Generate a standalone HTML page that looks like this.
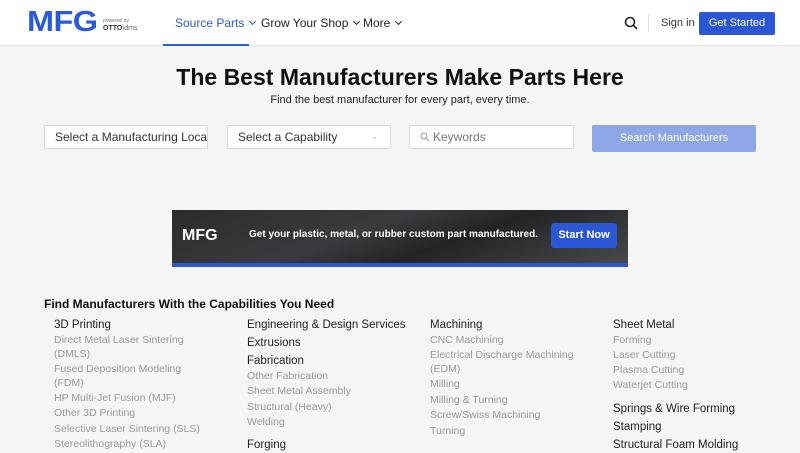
<!DOCTYPE html>
<html><head><meta charset="utf-8"><style>
*{margin:0;padding:0;box-sizing:border-box}
body{width:800px;height:450px;overflow:hidden;background:#f5f5f5;font-family:"Liberation Sans",sans-serif;position:relative;color:#222}
.hdr{position:absolute;left:0;top:0;width:800px;height:46px;background:#fff;border-bottom:1px solid #e6e6e6}
.a{position:absolute;white-space:nowrap;line-height:1.2}
.nav{font-size:12px;top:16px;color:#222}
.chev{display:inline-block;width:5px;height:5px;border-right:1.2px solid currentColor;border-bottom:1.2px solid currentColor;transform:rotate(45deg);margin-left:6px;position:relative;top:-3px}
.box{position:absolute;top:125px;height:24px;background:#fff;border:1px solid #d8d8d8;border-radius:2px;font-size:12px;color:#333;padding:0 10px;line-height:22px;white-space:nowrap;overflow:hidden}
.h{font-size:11.5px;color:#222}
.s{font-size:10.5px;color:#999}
.l{position:absolute;left:0;top:1px;width:800px;height:450px}
</style></head><body>
<div class="hdr">
  <div class="a" style="left:27px;top:8px;font-size:29px;line-height:29px;font-weight:bold;color:#2b5bd7;letter-spacing:-0.5px;transform:scaleX(1.12);transform-origin:left">MFG</div>
  <div class="a" style="left:103px;top:18px;font-size:5px;color:#777">powered by</div>
  <div class="a" style="left:103px;top:25px;font-size:7px;font-weight:bold;color:#333">OTTO<span style="font-weight:normal;color:#666">\dms</span></div>
  <div class="a nav" style="left:175px;color:#2b5bd7">Source Parts<span class="chev"></span></div>
  <div style="position:absolute;left:163px;top:44px;width:86px;height:2px;background:#2b5bd7"></div>
  <div class="a nav" style="left:261px">Grow Your Shop<span class="chev"></span></div>
  <div class="a nav" style="left:363px">More<span class="chev"></span></div>
  <svg class="a" style="left:624px;top:16px" width="14" height="14" viewBox="0 0 14 14"><circle cx="6" cy="6" r="4.5" fill="none" stroke="#222" stroke-width="1.6"/><path d="M9.3 9.3L13 13" stroke="#222" stroke-width="1.6"/></svg>
  <div style="position:absolute;left:648px;top:15px;width:1px;height:17px;background:#ddd"></div>
  <div class="a" style="left:661px;top:17px;font-size:11px;color:#333">Sign in</div>
  <div class="a" style="left:699px;top:12px;width:76px;height:23px;background:#2b57d4;border-radius:2px;color:#fff;font-size:11px;text-align:center;line-height:23px">Get Started</div>
</div>
<div class="a" style="left:0;width:800px;top:64px;text-align:center;font-size:23px;font-weight:bold;color:#111">The Best Manufacturers Make Parts Here</div>
<div class="a" style="left:0;width:800px;top:94px;text-align:center;font-size:11px;color:#222">Find the best manufacturer for every part, every time.</div>
<div class="box" style="left:44px;width:164px">Select a Manufacturing Location</div>
<div class="box" style="left:227px;width:164px">Select a Capability<span style="position:absolute;right:12px;top:0;font-size:8px;color:#bbb">&#8964;</span></div>
<div class="box" style="left:409px;width:165px;color:#777"><svg width="10" height="10" viewBox="0 0 10 10" style="vertical-align:-1px;margin-right:3px"><circle cx="4" cy="4" r="3" fill="none" stroke="#999" stroke-width="1"/><path d="M6.2 6.2L9 9" stroke="#999"/></svg>Keywords</div>
<div class="a" style="left:592px;top:125px;width:164px;height:27px;background:#8fa7e7;border-radius:2px;color:#fff;font-size:11px;text-align:center;line-height:27px">Search Manufacturers</div>
<div style="position:absolute;left:172px;top:210px;width:456px;height:57px;background:linear-gradient(160deg,#2a2b2d 0%,#3a3b3e 40%,#232426 60%,#4a4b4d 100%);overflow:hidden">
  <div style="position:absolute;left:120px;top:-40px;width:500px;height:120px;border-radius:50%;border-bottom:5px solid #1a1a1a;transform:rotate(-8deg)"></div>
  <div class="a" style="left:10px;top:16px;font-size:16px;font-weight:bold;color:#fff">MFG</div>
  <div class="a" style="left:77px;top:19px;font-size:10px;font-weight:bold;color:#fff">Get your plastic, metal, or rubber custom part manufactured.</div>
  <div class="a" style="left:379px;top:13px;width:66px;height:25px;background:#2b57d4;border-radius:3px;color:#fff;font-size:11px;font-weight:bold;text-align:center;line-height:25px">Start Now</div>
  <div style="position:absolute;left:0;bottom:0;width:456px;height:4px;background:#2b57d4"></div>
</div>
<div class="a" style="left:44px;top:297px;font-size:12px;font-weight:bold;color:#111">Find Manufacturers With the Capabilities You Need</div>

<div class="l">
<div class="a h" style="left:54px;top:318px">3D Printing</div>
<div class="a s" style="left:54px;top:333px">Direct Metal Laser Sintering</div>
<div class="a s" style="left:54px;top:347px">(DMLS)</div>
<div class="a s" style="left:54px;top:362px">Fused Deposition Modeling</div>
<div class="a s" style="left:54px;top:376px">(FDM)</div>
<div class="a s" style="left:54px;top:391px">HP Multi-Jet Fusion (MJF)</div>
<div class="a s" style="left:54px;top:406px">Other 3D Printing</div>
<div class="a s" style="left:54px;top:422px">Selective Laser Sintering (SLS)</div>
<div class="a s" style="left:54px;top:437px">Stereolithography (SLA)</div>

<div class="a h" style="left:247px;top:318px">Engineering &amp; Design Services</div>
<div class="a h" style="left:247px;top:336px">Extrusions</div>
<div class="a h" style="left:247px;top:354px">Fabrication</div>
<div class="a s" style="left:247px;top:369px">Other Fabrication</div>
<div class="a s" style="left:247px;top:384px">Sheet Metal Assembly</div>
<div class="a s" style="left:247px;top:400px">Structural (Heavy)</div>
<div class="a s" style="left:247px;top:415px">Welding</div>
<div class="a h" style="left:247px;top:438px">Forging</div>

<div class="a h" style="left:430px;top:318px">Machining</div>
<div class="a s" style="left:430px;top:333px">CNC Machining</div>
<div class="a s" style="left:430px;top:348px">Electrical Discharge Machining</div>
<div class="a s" style="left:430px;top:362px">(EDM)</div>
<div class="a s" style="left:430px;top:377px">Milling</div>
<div class="a s" style="left:430px;top:393px">Milling &amp; Turning</div>
<div class="a s" style="left:430px;top:408px">Screw/Swiss Machining</div>
<div class="a s" style="left:430px;top:424px">Turning</div>

<div class="a h" style="left:613px;top:318px">Sheet Metal</div>
<div class="a s" style="left:613px;top:333px">Forming</div>
<div class="a s" style="left:613px;top:348px">Laser Cutting</div>
<div class="a s" style="left:613px;top:363px">Plasma Cutting</div>
<div class="a s" style="left:613px;top:378px">Waterjet Cutting</div>
<div class="a h" style="left:613px;top:402px">Springs &amp; Wire Forming</div>
<div class="a h" style="left:613px;top:420px">Stamping</div>
<div class="a h" style="left:613px;top:438px">Structural Foam Molding</div>
</div>
</body></html>
